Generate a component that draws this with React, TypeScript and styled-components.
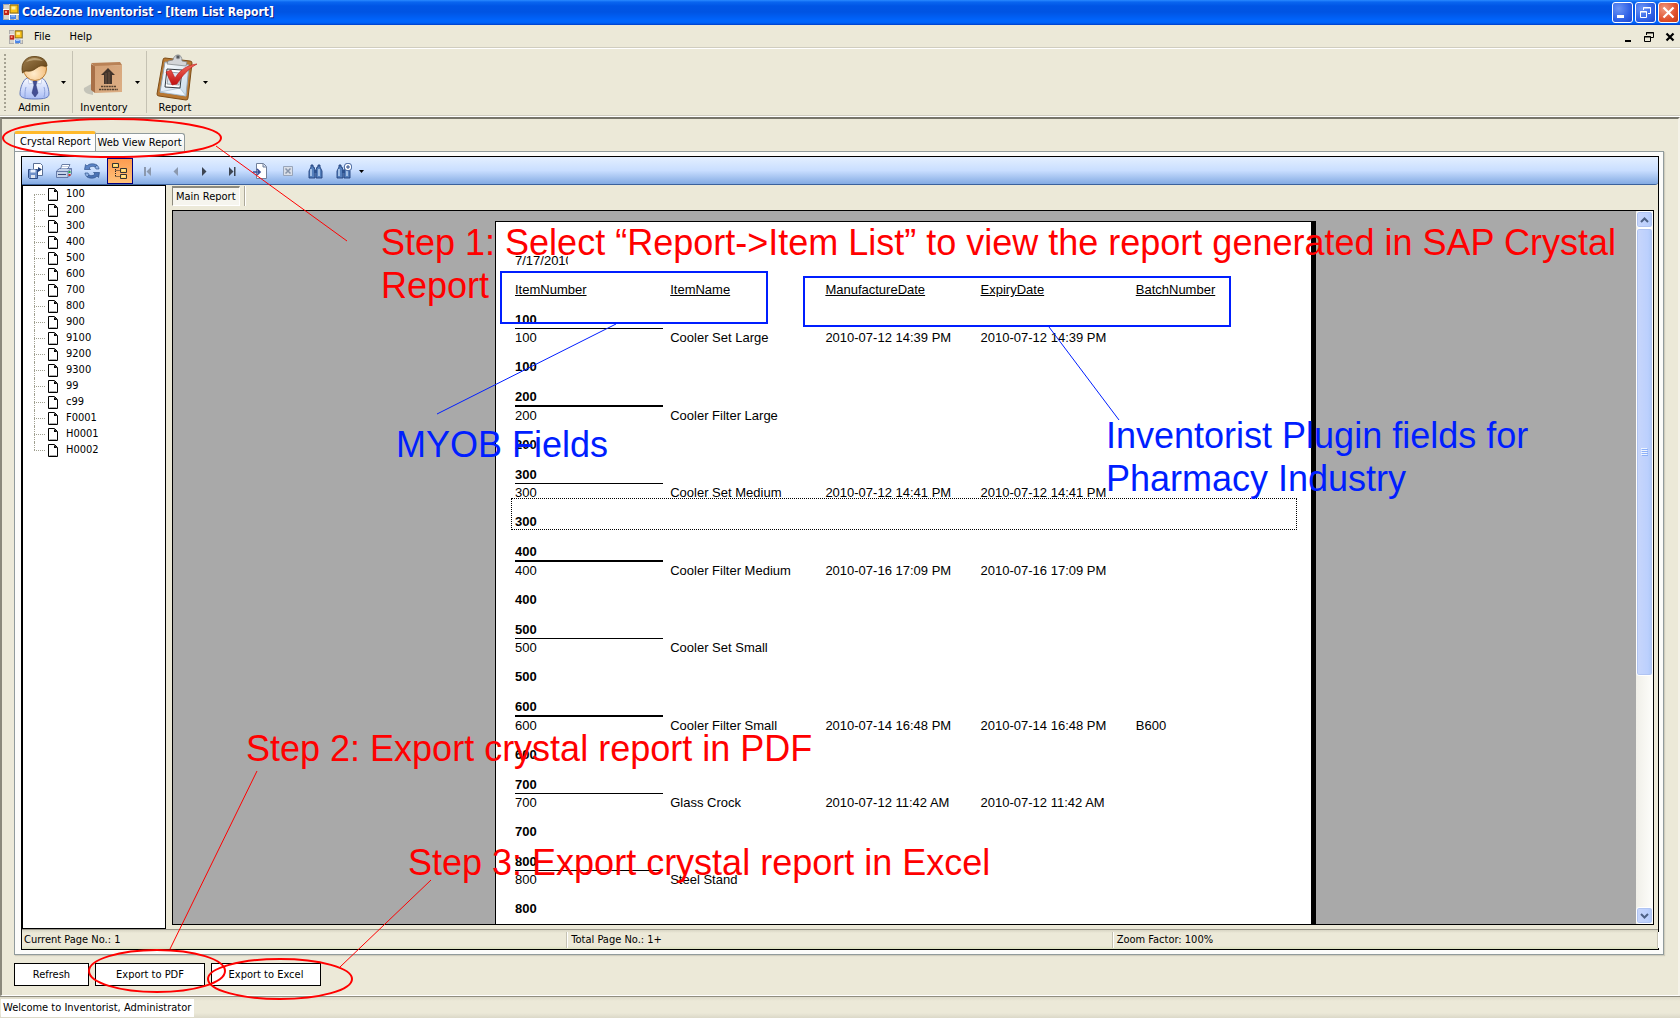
import React from "react";
import styled, { createGlobalStyle, css } from "styled-components";

const GlobalStyle = createGlobalStyle`
  *, *::before, *::after { box-sizing: border-box; }
  html, body { margin: 0; padding: 0; }
  body {
    background: #fff;
    color: #000;
    font-family: "DejaVu Sans Condensed", "DejaVu Sans", "Noto Sans", sans-serif;
    font-size: 11px;
    line-height: 14px;
  }
  button {
    margin: 0;
    padding: 0;
    border: 0;
    background: none;
    color: inherit;
    font: inherit;
  }
  svg { display: block; }
`;

const face = "#ece9d8";

/* ---------- window frame ---------- */

const Window = styled.div`
  position: relative;
  display: flex;
  flex-direction: column;
  height: 100vh;
  overflow: hidden;
  background: ${face};
`;

const TitleBar = styled.header`
  display: flex;
  flex: 0 0 25px;
  align-items: center;
  gap: 3px;
  padding: 0 1px 1px 3px;
  background: linear-gradient(#2a8bff 0, #0a66f0 2px, #0055e5 6px, #0054e3 12px, #0066ff 21px, #0062f8 23px, #003dc8 25px);
`;

const Title = styled.h1`
  flex: 1;
  margin: 0;
  color: #fff;
  font-size: 12px;
  font-weight: bold;
  line-height: 18px;
  text-shadow: 1px 1px 0 #0a1883;
`;

const CaptionButtons = styled.div`
  display: flex;
  gap: 2px;
`;

const CaptionButton = styled.button<{ $danger?: boolean }>`
  display: grid;
  place-items: center;
  width: 21px;
  height: 21px;
  border: 1px solid #fff;
  border-radius: 3px;
  background: ${(p) =>
    p.$danger
      ? "radial-gradient(circle at 30% 30%, #f09a80, #e0502c 60%, #c33a14)"
      : "radial-gradient(circle at 30% 30%, #6c95f5, #2f61e6 60%, #1c46cf)"};
`;

const MenuBar = styled.nav`
  display: flex;
  flex: 0 0 24px;
  align-items: center;
  padding: 0 5px 0 9px;
  border-bottom: 1px solid #fff;
  box-shadow: inset 0 -1px 0 #d0cdbf;
`;

const MenuItem = styled.button`
  margin-left: 6px;
  padding: 0 5px;

  & + & {
    margin-left: 9px;
  }
`;

const ChildButtons = styled.div`
  display: flex;
  gap: 11px;
  margin-left: auto;
`;

/* ---------- main tool bar ---------- */

const MainToolBar = styled.div`
  display: flex;
  flex: 0 0 68px;
  gap: 3px;
  padding: 2px 0 0 4px;
  border-bottom: 1px solid #fff;
  box-shadow: inset 0 -1px 0 #d0cdbf;
`;

const Grip = styled.div`
  width: 3px;
  margin: 3px 0 5px;
  background: radial-gradient(circle at 1px 1px, #a5a292 1px, transparent 1px) 0 0 / 3px 4px;
`;

const ToolSeparator = styled.div`
  width: 1px;
  margin-bottom: 3px;
  background: #c5c2b3;
`;

const ToolGroup = styled.div`
  display: flex;
`;

const ToolButton = styled.button<{ $width: number }>`
  display: flex;
  flex-direction: column;
  align-items: center;
  justify-content: flex-end;
  width: ${(p) => p.$width}px;
  padding-bottom: 1px;
`;

const ToolArrow = styled.button`
  display: grid;
  place-items: center;
  width: 11px;
  height: 62px;
`;

/* ---------- document window ---------- */

const Client = styled.main`
  display: flex;
  flex: 1;
  flex-direction: column;
  min-height: 0;
  padding: 12px 14px 9px 12px;
  border: solid;
  border-width: 2px 2px 1px;
  border-color: #77756a #f5f3ea #fff #8b897c;
`;

const TabList = styled.div`
  display: flex;
  flex: 0 0 20px;
  align-items: flex-end;
`;

const Tab = styled.button<{ $active?: boolean }>`
  height: 18px;
  padding: 0 2px;
  border: 1px solid #919b9c;
  border-bottom: 0;
  border-left: 0;
  border-radius: 0 3px 0 0;
  background: linear-gradient(#fff, #f0f0ea);
  line-height: 18px;
  white-space: nowrap;

  ${(p) =>
    p.$active &&
    css`
      height: 20px;
      padding: 0 4px 2px 5px;
      border-top: 3px solid #ffb92b;
      border-left: 1px solid #919b9c;
      border-radius: 3px 3px 0 0;
      background: #fcfcfe;
      line-height: 14px;
    `}
`;

const TabPanel = styled.section`
  display: flex;
  flex: 1;
  min-height: 0;
  padding: 4px 4px 4px 6px;
  border: 1px solid #919b9c;
  background: #fcfcfa;
  box-shadow: 1px 1px 1px #cfccbc;
`;

const Viewer = styled.div`
  display: flex;
  flex: 1;
  flex-direction: column;
  min-width: 0;
  border: 1px solid #000;
  background: ${face};
`;

const ViewerBar = styled.div`
  display: flex;
  flex: 0 0 28px;
  align-items: center;
  gap: 2px;
  padding: 1px 1px 0;
  border-bottom: 1px solid #3b619c;
  border-radius: 0 0 3px 0;
  background: linear-gradient(#e3efff, #c9deff 50%, #84abe3);
`;

const ViewerButton = styled.button<{ $pressed?: boolean }>`
  display: grid;
  place-items: center;
  width: 26px;
  height: 26px;
  border: 1px solid ${(p) => (p.$pressed ? "#000080" : "transparent")};
  background: ${(p) => (p.$pressed ? "linear-gradient(#fe9b4f, #ffc27a)" : "none")};
`;

const ViewerBody = styled.div`
  display: flex;
  flex: 1;
  min-height: 0;
`;

/* ---------- group tree ---------- */

const Tree = styled.ul`
  flex: 0 0 144px;
  margin: 0;
  padding: 0 0 0 11px;
  border: 1px solid #000;
  background: #fff;
  list-style: none;
`;

const TreeItem = styled.li`
  position: relative;
  display: flex;
  align-items: center;
  gap: 7px;
  height: 16px;
  padding-left: 14px;

  &::before {
    position: absolute;
    top: 0;
    bottom: 0;
    left: 0;
    border-left: 1px dotted #a0a090;
    content: "";
  }
  &:first-child::before {
    top: 8px;
  }
  &:last-child::before {
    bottom: 8px;
  }
  &::after {
    position: absolute;
    top: 8px;
    left: 0;
    width: 11px;
    border-top: 1px dotted #a0a090;
    content: "";
  }
`;

/* ---------- report area ---------- */

const ReportPane = styled.div`
  display: flex;
  flex: 1;
  flex-direction: column;
  min-width: 0;
  padding: 1px 4px 4px 6px;
`;

const ReportTabs = styled.div`
  display: flex;
  flex: 0 0 24px;
  gap: 4px;
`;

const ReportTab = styled.button`
  height: 20px;
  padding: 0 3px;
  border: 1px solid #fff;
  border-top: 2px solid #8b897c;
  border-left-color: #8b897c;
  background: #f6f5ee;
  line-height: 17px;
`;

const ReportTabsEnd = styled.div`
  width: 2px;
  height: 20px;
  border-right: 1px solid #fff;
  border-left: 1px solid #aca899;
`;

const ReportFrame = styled.div`
  display: flex;
  flex: 1;
  min-height: 0;
  border: 1px solid #000;
  background: #a9a9a9;
`;

const Canvas = styled.div`
  display: flex;
  flex: 1;
  justify-content: center;
  align-items: flex-start;
  min-width: 0;
  padding: 10px 0 0 2px;
  overflow: hidden;
`;

const Page = styled.article`
  flex: 0 0 821px;
  min-height: 1060px;
  padding: 31px 19px;
  border: 1px solid #000;
  border-right-width: 5px;
  background: #fff;
  font-family: "Liberation Sans", Arial, sans-serif;
  font-size: 13px;
  line-height: 16px;
`;

const PrintDate = styled.time`
  display: block;
  width: 53px;
  margin-bottom: 13px;
  overflow: hidden;
  white-space: nowrap;
`;

const ReportTable = styled.table`
  width: 776px;
  border-collapse: collapse;
  table-layout: fixed;
  text-align: left;

  th,
  td {
    padding: 0;
    white-space: nowrap;
  }
`;

const ColumnHead = styled.th`
  height: 30px;
  font-weight: normal;
  text-decoration: underline;
  text-underline-offset: 1px;
  vertical-align: top;
`;

const GroupName = styled.div<{ $heavy: boolean }>`
  width: 148px;
  border-bottom: ${(p) => (p.$heavy ? 2 : 1)}px solid #000;
`;

const DetailCell = styled.td`
  line-height: 18px;
`;

const GroupFooter = styled.td<{ $selected: boolean }>`
  && {
    position: relative;
    padding: 12px 0 14px;
    font-weight: bold;
  }

  ${(p) =>
    p.$selected &&
    css`
      &::after {
        position: absolute;
        top: -4px;
        left: -4px;
        width: 786px;
        height: 32px;
        border: 1px dotted #000;
        content: "";
      }
    `}
`;

/* ---------- scroll bar ---------- */

const ScrollBar = styled.div`
  display: flex;
  flex: 0 0 17px;
  flex-direction: column;
  background: linear-gradient(90deg, #f0efe8, #fefefb);
`;

const scrollPart = css`
  display: grid;
  place-items: center;
  border: 1px solid #fff;
  border-radius: 3px;
  background: linear-gradient(90deg, #c8d6fb, #bcd0fd 70%, #aec8f7);
  box-shadow: inset 0 0 0 1px #b0c4f2;
`;

const ScrollButton = styled.button`
  ${scrollPart}
  flex: 0 0 17px;
`;

const ScrollTrack = styled.div`
  flex: 1;
  min-height: 0;
`;

const ScrollThumb = styled.div`
  ${scrollPart}
  height: 66%;
`;

/* ---------- footers ---------- */

const ViewerStatus = styled.footer`
  display: grid;
  flex: 0 0 20px;
  grid-template-columns: repeat(3, 1fr);
  padding: 2px 0 1px;
  border-top: 1px solid #99968a;
  background: linear-gradient(#d8d5c4, ${face} 3px, ${face} 16px, #dbe0bf);
`;

const StatusCell = styled.span`
  padding: 1px 2px;
  border-right: 1px solid #c5c2b3;
  box-shadow: 1px 0 0 #fff;

  & + & {
    padding-left: 4px;
  }
`;

const Actions = styled.div`
  display: flex;
  flex: 0 0 23px;
  gap: 6px;
  margin-top: 8px;
`;

const ActionButton = styled.button<{ $width: number }>`
  width: ${(p) => p.$width}px;
  border: 1px solid #000;
  background: #fff;
`;

const StatusBar = styled.footer`
  display: flex;
  flex: 0 0 22px;
  padding: 2px 1px 1px;
  border-top: 1px solid #908d80;
  border-bottom: 1px solid #fff;
  background: linear-gradient(#dddac9, ${face} 4px, ${face} 16px, #dbd8c8);
`;

const Welcome = styled.span`
  padding: 0 3px 0 2px;
  background: #fff;
  line-height: 18px;
`;

/* ---------- annotations laid over the window ---------- */

const Markup = styled.svg`
  position: absolute;
  top: 0;
  left: 0;
  width: 100%;
  height: 100%;
  fill: none;
  pointer-events: none;
`;

const Note = styled.p<{ $x: number; $y: number; $color: string }>`
  position: absolute;
  top: ${(p) => p.$y}px;
  left: ${(p) => p.$x}px;
  margin: 0;
  color: ${(p) => p.$color};
  font-family: "Liberation Sans", Arial, sans-serif;
  font-size: 36px;
  line-height: 43px;
  white-space: nowrap;
  pointer-events: none;
`;

/* ---------- icons ---------- */

const AppIcon = ({ size }: { size: number }) => (
  <svg width={size} height={size} viewBox="0 0 16 16" aria-hidden="true">
    <rect x="0.5" y="0.5" width="15" height="15" fill="#d8d5cc" stroke="#a8a8a8" />
    <path d="M0 5.5h6M6.5 0v16M6 10.5h10M12 10v6" stroke="#fff" />
    <rect x="7" y="1" width="8" height="8" fill="#f8c21c" stroke="#8a6a10" />
    <rect x="8.5" y="2.5" width="4" height="3" fill="#fff0a0" />
    <rect x="1" y="6" width="5" height="5" fill="#c02418" />
    <rect x="2" y="7" width="2" height="2" fill="#ff9a80" />
    <rect x="7" y="11" width="6" height="4" fill="#4a86e8" />
    <path d="M8 12h4" stroke="#b8d4ff" />
  </svg>
);

const DownArrow = () => (
  <svg width="5" height="3" viewBox="0 0 5 3" aria-hidden="true">
    <path d="M0 0h5L2.5 3z" fill="#000" />
  </svg>
);

const AdminIcon = () => (
  <svg width="48" height="48" viewBox="0 0 48 48" aria-hidden="true">
    <defs>
      <linearGradient id="coat" x1="0" y1="0" x2="0" y2="1">
        <stop offset="0" stopColor="#fafbff" />
        <stop offset="1" stopColor="#a9bdf6" />
      </linearGradient>
      <radialGradient id="skin" cx="0.45" cy="0.7" r="0.7">
        <stop offset="0" stopColor="#ffeccd" />
        <stop offset="1" stopColor="#f0b56c" />
      </radialGradient>
      <linearGradient id="hair" x1="0" y1="0" x2="1" y2="1">
        <stop offset="0" stopColor="#a08050" />
        <stop offset="1" stopColor="#5e3d10" />
      </linearGradient>
    </defs>
    <path d="M17 25c-4 2-7 10-7 16 0 4 6 5 15 5s14-1 14-5c0-6-3-14-7-16z" fill="url(#coat)" stroke="#6279bd" />
    <path d="M16 34c-1 3-1 6-1 10M34 34c1 3 1 6 0 10" fill="none" stroke="#8ea3dd" />
    <path d="M18 25l7 6 7-6-1 6-4-1-2 3-2-3-4 1z" fill="#fff" stroke="#a5b4df" strokeWidth="0.6" />
    <path d="M23 28h4l-1 4 2 8-3 4-3-4 2-8z" fill="#434f95" stroke="#2c3570" strokeWidth="0.5" />
    <circle cx="25" cy="16" r="11.5" fill="url(#skin)" stroke="#b97c33" />
    <path d="M12.500 20C10 9 17 3 25 3.500c7 0 12 4 12 9.500-3 1-4-1-7 0-5 2-6 6-14 5-2 0-2 1-3.500 2z" fill="url(#hair)" stroke="#5a3b0e" strokeWidth="0.8" />
    <path d="M16 9c4-5 12-5 17-1-5-1-12-1-17 1z" fill="#cdb68d" opacity="0.7" />
  </svg>
);

const InventoryIcon = () => (
  <svg width="48" height="48" viewBox="0 0 48 48" aria-hidden="true">
    <defs>
      <linearGradient id="boxFront" x1="0" y1="0" x2="1" y2="1">
        <stop offset="0" stopColor="#d3a176" />
        <stop offset="1" stopColor="#dcae84" />
      </linearGradient>
    </defs>
    <path d="M4 35l9-5v12C7 41 3 39 4 35z" fill="#b4b3ac" opacity="0.7" />
    <path d="M11 11l4 2v27l-4-3z" fill="#a87048" />
    <path d="M11 10l29-1 2 3-27 2z" fill="#b98256" />
    <path d="M15 13l27-1v27l-27 1z" fill="url(#boxFront)" />
    <path d="M28 15l7 7h-3v9h-8v-9h-3z" fill="#42342b" />
    <path d="M26 20v11M29 19v12" stroke="#8a694d" strokeWidth="0.6" />
    <path d="M21 33.500h15M19 36.500h19" stroke="#54402f" strokeWidth="1.500" strokeDasharray="2 0.600" />
  </svg>
);

const ReportIcon = () => (
  <svg width="48" height="48" viewBox="-3 0 48 48" aria-hidden="true">
    <defs>
      <linearGradient id="sheet" x1="0" y1="0" x2="1" y2="1">
        <stop offset="0" stopColor="#fff" />
        <stop offset="1" stopColor="#c6d9ea" />
      </linearGradient>
      <linearGradient id="tick" x1="0" y1="0" x2="0" y2="1">
        <stop offset="0" stopColor="#f46a5c" />
        <stop offset="1" stopColor="#c01010" />
      </linearGradient>
    </defs>
    <path d="M9 7q0-2 2-2l25 3q2 0 2 2l-4 35q0 2-2 2L5 43q-2 0-2-2z" fill="#b87832" stroke="#7d4c16" />
    <path d="M11 9l24 3-3 31-26-4z" fill="url(#sheet)" stroke="#93a4b4" />
    <path d="M6 39l26 4-6-8z" fill="#eef6fd" stroke="#9db3c6" strokeWidth="0.6" />
    <path d="M13 16l15 1-2 18-15-1z" fill="#fff" stroke="#343b42" />
    <path d="M15 19l11 1-1 12-12-1z" fill="#dce6ee" stroke="#77828c" strokeWidth="0.7" />
    <path d="M14 8l5-1q1-5 5-5t4 6l5 1-1 4-19-2z" fill="#d3d5d8" stroke="#7b7f83" strokeWidth="0.7" />
    <circle cx="24" cy="4" r="1.800" fill="#54585c" stroke="#8a8d90" />
    <path d="M12 19l5-2 4 8c5-8 12-13 22-14-9 5-15 12-20 20l-5 1z" fill="url(#tick)" stroke="#b81818" strokeWidth="0.6" />
  </svg>
);

const DocIcon = () => (
  <svg width="11" height="13" viewBox="0 0 11 13" aria-hidden="true">
    <path d="M0.500 0.500h6l3 3v9h-9z" fill="#fff" stroke="#000" />
    <path d="M6 1v3h3.500z" fill="#000" />
    <path d="M1.500 11.500h7" stroke="#aaa" />
  </svg>
);

const Binoculars = () => (
  <g>
    <path d="M3 2h2v2h1l1 3v8H1v-7l2-4zM10 2h2v2l2 4v7H8V7l1-3h1z" fill="#5580bd" stroke="#1f3f7a" strokeWidth="0.9" />
    <path d="M3 6v7M11 6v7" stroke="#d5e8ff" strokeWidth="1.200" />
    <path d="M6 7h3v3H6z" fill="#2d528f" />
  </g>
);

const viewerIcons: { label: string; pressed?: boolean; art: React.ReactNode }[] = [
  {
    label: "Export report",
    art: (
      <>
        <path d="M5.500 0.500h7l2 2v10h-9z" fill="#fff" stroke="#5a6f94" />
        <path d="M10 4v5l4-2.500z" fill="#1d3d78" />
        <path d="M0.500 6.500h9v9h-8l-1-1z" fill="#6f90c8" stroke="#2f4d86" />
        <path d="M2.500 6.500h5v3h-5z" fill="#e8f0ff" />
        <path d="M3 12h4v3H3z" fill="#dfe5f0" />
      </>
    ),
  },
  {
    label: "Print report",
    art: (
      <>
        <path d="M6 1.500h8l-3 6H4z" fill="#fff" stroke="#6b7fa5" />
        <path d="M0.500 8l3-2.500h12V11L12 14.500H0.500z" fill="#c5d3ea" stroke="#5a70a0" strokeWidth="0.9" />
        <path d="M1 8.500h11l3-3M12 8.500V14" fill="none" stroke="#5a70a0" strokeWidth="0.9" />
        <path d="M2 11.500h8" stroke="#3a4a78" />
        <path d="M6 3.500h6M5 5.500h6" stroke="#a9b8d4" strokeWidth="0.7" />
        <rect x="12.500" y="8" width="2" height="2" fill="#20b040" />
        <rect x="12.500" y="11" width="2" height="2" fill="#d83020" />
      </>
    ),
  },
  {
    label: "Refresh report",
    art: (
      <>
        <path d="M0.500 6.500h6L5 5c2-2 4-2 6-1l2-2C9 0 5 0.500 3 3L1.500 1.500z" fill="#5c84c6" stroke="#244780" strokeWidth="0.6" />
        <path d="M11 4l2-2c1 1 2 2.500 2 4h-3z" fill="#8fb1e4" stroke="#244780" strokeWidth="0.6" />
        <path d="M15.500 9.500h-6L11 11c-2 2-4 2-6 1l-2 2c4 2 8 1.500 10-1l1.500 1.500z" fill="#4a72b4" stroke="#244780" strokeWidth="0.6" />
        <path d="M5 12l-2 2c-1-1-2-2.500-2-4h3z" fill="#8fb1e4" stroke="#244780" strokeWidth="0.6" />
      </>
    ),
  },
  {
    label: "Toggle group tree",
    pressed: true,
    art: (
      <>
        <path d="M3.500 6v8M3.500 7.500h5M3.500 13.500h5" fill="none" stroke="#222" strokeDasharray="1 1" />
        <path d="M0.500 0.500h6v4h-6zM8.500 5.500h6v4h-6zM8.500 11.500h6v4h-6z" fill="#ffd060" stroke="#333" />
        <path d="M2 2h3M10 7h3M10 13h3" stroke="#fff4c0" />
      </>
    ),
  },
  { label: "First page", art: <path d="M4 4h2v9H4zM11 4v9L6.500 8.500z" fill="#8c99ae" /> },
  { label: "Previous page", art: <path d="M10 4v9L5.500 8.500z" fill="#8c99ae" /> },
  { label: "Next page", art: <path d="M6 4v9l4.500-4.500z" fill="#3d4552" /> },
  { label: "Last page", art: <path d="M5 4v9l4.500-4.500zM10 4h1.500v9H10z" fill="#3d4552" /> },
  {
    label: "Go to page",
    art: (
      <>
        <path d="M4.500 0.500h7l3 3v12h-10z" fill="#fff" stroke="#71809b" />
        <path d="M11 1v3h3" fill="#c9d6ea" stroke="#71809b" />
        <path d="M1 9h6M5 6l3 3-3 3" fill="none" stroke="#3a4d96" strokeWidth="1.700" />
      </>
    ),
  },
  {
    label: "Close current view",
    art: (
      <>
        <path d="M3.500 3.500h9v9h-9z" fill="#d9dee7" stroke="#98a5ba" />
        <path d="M5.500 5.500l5 5M10.500 5.500l-5 5" stroke="#8895aa" strokeWidth="1.500" />
      </>
    ),
  },
  { label: "Find text", art: <Binoculars /> },
  {
    label: "Zoom",
    art: (
      <>
        <Binoculars />
        <circle cx="12" cy="4" r="3.800" fill="#fff" stroke="#3f619d" />
        <path d="M12 2v4M10 4h4" stroke="#2b4b8a" />
      </>
    ),
  },
];

/* ---------- data ---------- */

const treeItems = [
  "100", "200", "300", "400", "500", "600", "700", "800", "900",
  "9100", "9200", "9300", "99", "c99", "F0001", "H0001", "H0002",
];

const columns = ["ItemNumber", "ItemName", "ManufactureDate", "ExpiryDate", "BatchNumber"];

type Item = {
  id: string;
  name: string;
  made?: string;
  expiry?: string;
  batch?: string;
  heavy?: boolean;
};

const items: Item[] = [
  { id: "100", name: "Cooler Set Large", made: "2010-07-12 14:39 PM", expiry: "2010-07-12 14:39 PM" },
  { id: "200", name: "Cooler Filter Large", heavy: true },
  { id: "300", name: "Cooler Set Medium", made: "2010-07-12 14:41 PM", expiry: "2010-07-12 14:41 PM" },
  { id: "400", name: "Cooler Filter Medium", made: "2010-07-16 17:09 PM", expiry: "2010-07-16 17:09 PM", heavy: true },
  { id: "500", name: "Cooler Set Small" },
  { id: "600", name: "Cooler Filter Small", made: "2010-07-14 16:48 PM", expiry: "2010-07-14 16:48 PM", batch: "B600", heavy: true },
  { id: "700", name: "Glass Crock", made: "2010-07-12 11:42 AM", expiry: "2010-07-12 11:42 AM" },
  { id: "800", name: "Steel Stand" },
];

const tools = [
  { label: "Admin", width: 48, icon: <AdminIcon /> },
  { label: "Inventory", width: 56, icon: <InventoryIcon /> },
  { label: "Report", width: 50, icon: <ReportIcon /> },
];

const red = "#ff0000";
const blue = "#001eff";

export default function App() {
  return (
    <Window>
      <GlobalStyle />

      <TitleBar>
        <AppIcon size={16} />
        <Title>CodeZone Inventorist - [Item List Report]</Title>
        <CaptionButtons>
          <CaptionButton aria-label="Minimize">
            <svg width="13" height="13" viewBox="0 0 13 13"><path d="M1 9h7v3H1z" fill="#fff" /></svg>
          </CaptionButton>
          <CaptionButton aria-label="Restore">
            <svg width="13" height="13" viewBox="0 0 13 13" fill="none" stroke="#fff">
              <path d="M4.500 4V1.500h7v6H9M4 2h8M1.500 5.500h6v6h-6zM1 6h7" />
            </svg>
          </CaptionButton>
          <CaptionButton aria-label="Close" $danger>
            <svg width="13" height="13" viewBox="0 0 13 13"><path d="M1.500 1.500l10 10M11.500 1.500l-10 10" stroke="#fff" strokeWidth="2.200" /></svg>
          </CaptionButton>
        </CaptionButtons>
      </TitleBar>

      <MenuBar>
        <AppIcon size={14} />
        <MenuItem>File</MenuItem>
        <MenuItem>Help</MenuItem>
        <ChildButtons>
          <button aria-label="Minimize document">
            <svg width="10" height="10" viewBox="0 0 10 10"><path d="M2 8h6v2H2z" /></svg>
          </button>
          <button aria-label="Restore document">
            <svg width="10" height="10" viewBox="0 0 10 10" fill="none" stroke="#000">
              <path d="M2.500 3V0.500h7v5H7M2 1h8M0.500 4.500h6v5h-6zM0 5h7" />
            </svg>
          </button>
          <button aria-label="Close document">
            <svg width="10" height="10" viewBox="0 0 10 10"><path d="M1.500 1.500l7 7M8.500 1.500l-7 7" stroke="#000" strokeWidth="2.200" /></svg>
          </button>
        </ChildButtons>
      </MenuBar>

      <MainToolBar>
        <Grip />
        {tools.map((tool, i) => (
          <React.Fragment key={tool.label}>
            {i > 0 && <ToolSeparator />}
            <ToolGroup>
              <ToolButton $width={tool.width}>
                {tool.icon}
                {tool.label}
              </ToolButton>
              <ToolArrow aria-label={`${tool.label} menu`}>
                <DownArrow />
              </ToolArrow>
            </ToolGroup>
          </React.Fragment>
        ))}
      </MainToolBar>

      <Client>
        <TabList role="tablist">
          <Tab role="tab" aria-selected="true" $active>Crystal Report</Tab>
          <Tab role="tab" aria-selected="false">Web View Report</Tab>
        </TabList>
        <TabPanel role="tabpanel">
          <Viewer>
            <ViewerBar role="toolbar">
              {viewerIcons.map((icon) => (
                <ViewerButton key={icon.label} aria-label={icon.label} $pressed={icon.pressed}>
                  <svg width="16" height="16" viewBox="0 0 16 16">{icon.art}</svg>
                </ViewerButton>
              ))}
              <DownArrow />
            </ViewerBar>

            <ViewerBody>
              <Tree>
                {treeItems.map((name) => (
                  <TreeItem key={name}>
                    <DocIcon />
                    {name}
                  </TreeItem>
                ))}
              </Tree>
              <ReportPane>
                <ReportTabs>
                  <ReportTab>Main Report</ReportTab>
                  <ReportTabsEnd />
                </ReportTabs>
                <ReportFrame>
                  <Canvas>
                    <Page>
                      <PrintDate>7/17/2010</PrintDate>
                      <ReportTable>
                        <thead>
                          <tr>
                            {columns.map((name) => (
                              <ColumnHead key={name} scope="col">{name}</ColumnHead>
                            ))}
                          </tr>
                        </thead>
                        {items.map((item) => (
                          <tbody key={item.id}>
                            <tr>
                              <th colSpan={5} scope="rowgroup">
                                <GroupName $heavy={Boolean(item.heavy)}>{item.id}</GroupName>
                              </th>
                            </tr>
                            <tr>
                              <DetailCell>{item.id}</DetailCell>
                              <DetailCell>{item.name}</DetailCell>
                              <DetailCell>{item.made}</DetailCell>
                              <DetailCell>{item.expiry}</DetailCell>
                              <DetailCell>{item.batch}</DetailCell>
                            </tr>
                            <tr>
                              <GroupFooter colSpan={5} $selected={item.id === "300"}>{item.id}</GroupFooter>
                            </tr>
                          </tbody>
                        ))}
                      </ReportTable>
                    </Page>
                  </Canvas>
                  <ScrollBar>
                    <ScrollButton aria-label="Scroll up">
                      <svg width="9" height="6" viewBox="0 0 9 6"><path d="M1 5l3.500-3.500L8 5" fill="none" stroke="#4d6185" strokeWidth="2" /></svg>
                    </ScrollButton>
                    <ScrollTrack>
                      <ScrollThumb>
                        <svg width="7" height="8" viewBox="0 0 7 8"><path d="M0 0.500h6M0 2.500h6M0 4.500h6M0 6.500h6" stroke="#eef4fe" /><path d="M1 1.500h6M1 3.500h6M1 5.500h6M1 7.500h6" stroke="#8cb0f8" /></svg>
                      </ScrollThumb>
                    </ScrollTrack>
                    <ScrollButton aria-label="Scroll down">
                      <svg width="9" height="6" viewBox="0 0 9 6"><path d="M1 1l3.500 3.500L8 1" fill="none" stroke="#4d6185" strokeWidth="2" /></svg>
                    </ScrollButton>
                  </ScrollBar>
                </ReportFrame>
              </ReportPane>
            </ViewerBody>

            <ViewerStatus>
              <StatusCell>Current Page No.: 1</StatusCell>
              <StatusCell>Total Page No.: 1+</StatusCell>
              <StatusCell>Zoom Factor: 100%</StatusCell>
            </ViewerStatus>
          </Viewer>
        </TabPanel>
        <Actions>
          <ActionButton $width={75}>Refresh</ActionButton>
          <ActionButton $width={110}>Export to PDF</ActionButton>
          <ActionButton $width={110}>Export to Excel</ActionButton>
        </Actions>
      </Client>

      <StatusBar>
        <Welcome>Welcome to Inventorist, Administrator</Welcome>
      </StatusBar>

      <Markup aria-hidden="true">
        <g stroke={red} strokeWidth="2">
          <ellipse cx="112" cy="138" rx="109" ry="19" />
          <ellipse cx="157" cy="971" rx="68" ry="21" />
          <ellipse cx="280" cy="979" rx="72" ry="20" />
        </g>
        <path d="M216 146L347 241M257 771L170 949M431 880L340 967" stroke={red} />
        <g stroke={blue} strokeWidth="2">
          <rect x="501" y="272" width="266" height="51" />
          <rect x="804" y="277" width="426" height="49" />
        </g>
        <path d="M616 324L437 414M1049 327L1119 420" stroke={blue} />
      </Markup>
      <Note $x={381} $y={221} $color={red}>
        Step 1: Select “Report-&gt;Item List” to view the report generated in SAP Crystal
        <br />
        Report
      </Note>
      <Note $x={246} $y={727} $color={red}>Step 2: Export crystal report in PDF</Note>
      <Note $x={408} $y={841} $color={red}>Step 3: Export crystal report in Excel</Note>
      <Note $x={396} $y={423} $color={blue}>MYOB Fields</Note>
      <Note $x={1106} $y={414} $color={blue}>
        Inventorist Plugin fields for
        <br />
        Pharmacy Industry
      </Note>
    </Window>
  );
}
